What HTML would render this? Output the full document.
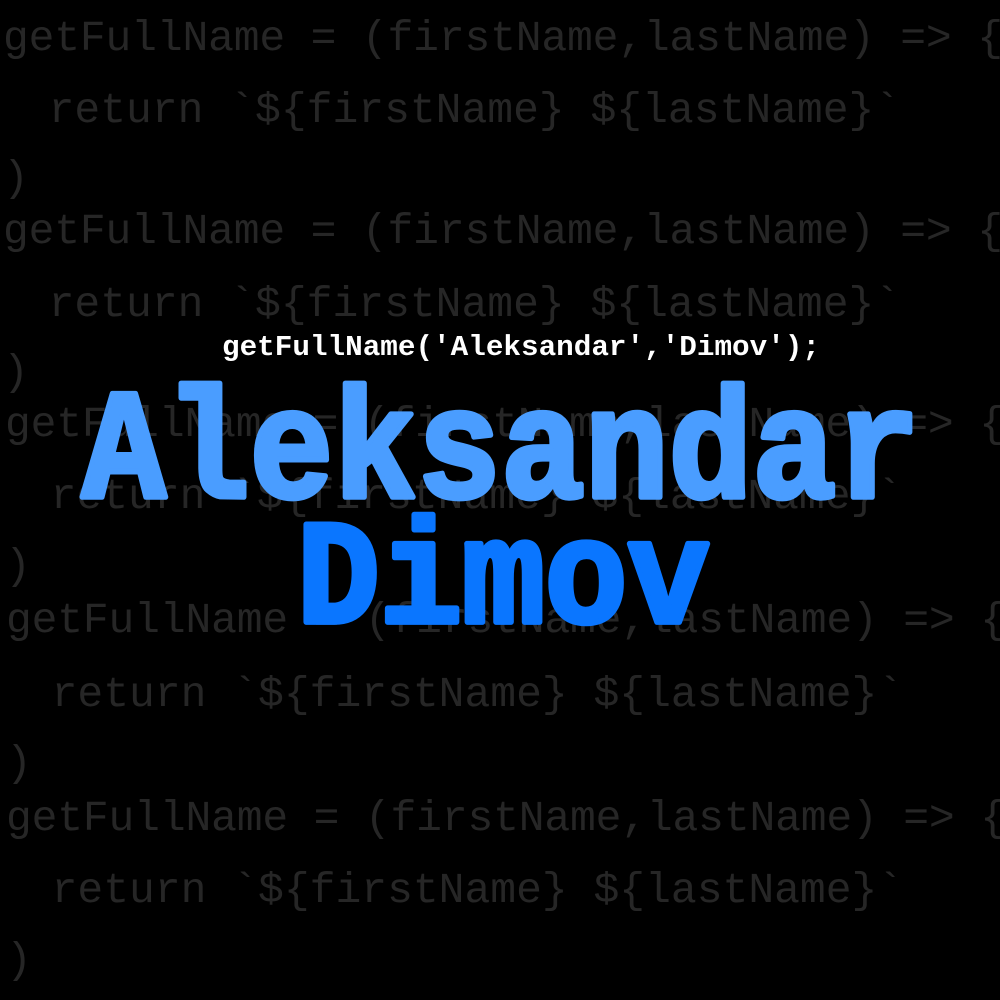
<!DOCTYPE html>
<html><head><meta charset="utf-8"><style>
html,body{margin:0;padding:0;background:#000;width:1000px;height:1000px;overflow:hidden}
svg{display:block}
.bg{font-family:"Liberation Mono",monospace;font-size:43px;fill:#262626;white-space:pre}
</style></head><body>
<svg width="1000" height="1000" viewBox="0 0 1000 1000" xmlns="http://www.w3.org/2000/svg">
<rect width="1000" height="1000" fill="#000"/>
<g class="bg">
<text x="3" y="50" textLength="1000" lengthAdjust="spacing">getFullName = (firstName,lastName) =&gt; {</text>
<text x="-3" y="122" xml:space="preserve">  return `${firstName} ${lastName}`</text>
<text x="3" y="190">)</text>
<text x="3" y="243" textLength="1000" lengthAdjust="spacing">getFullName = (firstName,lastName) =&gt; {</text>
<text x="-3" y="316" xml:space="preserve">  return `${firstName} ${lastName}`</text>
<text x="3" y="384">)</text>
<text x="5" y="436" textLength="1000" lengthAdjust="spacing">getFullName = (firstName,lastName) =&gt; {</text>
<text x="-1" y="508" xml:space="preserve">  return `${firstName} ${lastName}`</text>
<text x="5" y="578">)</text>
<text x="6" y="632" textLength="1000" lengthAdjust="spacing">getFullName = (firstName,lastName) =&gt; {</text>
<text x="0" y="706" xml:space="preserve">  return `${firstName} ${lastName}`</text>
<text x="6" y="775">)</text>
<text x="6" y="830" textLength="1000" lengthAdjust="spacing">getFullName = (firstName,lastName) =&gt; {</text>
<text x="0" y="902" xml:space="preserve">  return `${firstName} ${lastName}`</text>
<text x="6" y="972">)</text>
</g>
<text x="222" y="355" font-family="Liberation Mono, monospace" font-size="29" font-weight="bold" fill="#fff" textLength="598" lengthAdjust="spacingAndGlyphs">getFullName('Aleksandar','Dimov');</text>
<g transform="translate(0,497) scale(1,1.12)">
<text x="82" y="0" font-family="Liberation Mono, monospace" font-size="140" font-weight="bold" fill="#4a9dff" stroke="#4a9dff" stroke-width="5" stroke-linejoin="round" textLength="838" lengthAdjust="spacingAndGlyphs">Aleksandar</text>
</g>
<g transform="translate(0,622) scale(1,1.14)">
<text x="297" y="0" font-family="Liberation Mono, monospace" font-size="130" font-weight="bold" fill="#0a76ff" stroke="#0a76ff" stroke-width="5" stroke-linejoin="round" textLength="413" lengthAdjust="spacingAndGlyphs">Dimov</text>
</g>
</svg>
</body></html>
